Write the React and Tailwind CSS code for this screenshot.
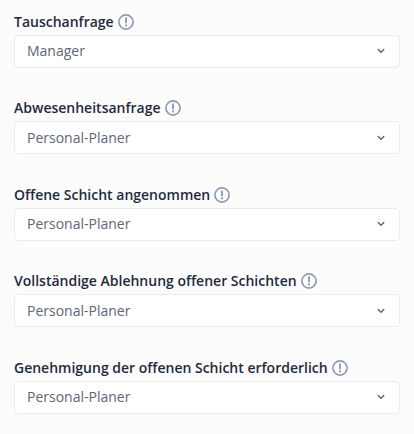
import React from 'react';

const rows = [
  { label: 'Tauschanfrage', value: 'Manager' },
  { label: 'Abwesenheitsanfrage', value: 'Personal-Planer' },
  { label: 'Offene Schicht angenommen', value: 'Personal-Planer' },
  { label: 'Vollständige Ablehnung offener Schichten', value: 'Personal-Planer' },
  { label: 'Genehmigung der offenen Schicht erforderlich', value: 'Personal-Planer' },
];

const InfoIcon = () => (
  <svg width="16" height="16" viewBox="0 0 16 16" fill="none" className="shrink-0">
    <circle cx="8" cy="8" r="7.1" stroke="#8e9bb3" strokeWidth="1.7" />
    <path d="M8 4.2V8.6" stroke="#8e9bb3" strokeWidth="1.9" strokeLinecap="round" />
    <circle cx="8" cy="11.4" r="1.1" fill="#8e9bb3" />
  </svg>
);

const Chevron = () => (
  <svg width="8" height="6" viewBox="0 0 8 6" fill="none" className="mt-[1px]">
    <path d="M1.2 1.4L4 4.2L6.8 1.4" stroke="#56647d" strokeWidth="1.4" strokeLinecap="round" strokeLinejoin="round" />
  </svg>
);

const App = () => {
  return (
    <div className="w-[414px] h-[434px] overflow-hidden bg-[#fcfcfc] px-[14px] pt-[12.8px] font-['Open_Sans',sans-serif]">
      {rows.map((row) => (
        <div key={row.label} className="mb-[31.5px]">
          <div className="flex items-center gap-[4px] h-[18px] mb-[4px] text-[14px] leading-[18px] font-semibold text-[#1f2a3d]">
            <span>{row.label}</span>
            <InfoIcon />
          </div>
          <div className="flex items-center justify-between h-[33px] rounded-[4px] border border-[#ebebeb] bg-white pl-[12px] pr-[14px] pb-[1px] text-[14px] text-[#5d6675]">
            <span>{row.value}</span>
            <Chevron />
          </div>
        </div>
      ))}
    </div>
  );
};

export default App;
